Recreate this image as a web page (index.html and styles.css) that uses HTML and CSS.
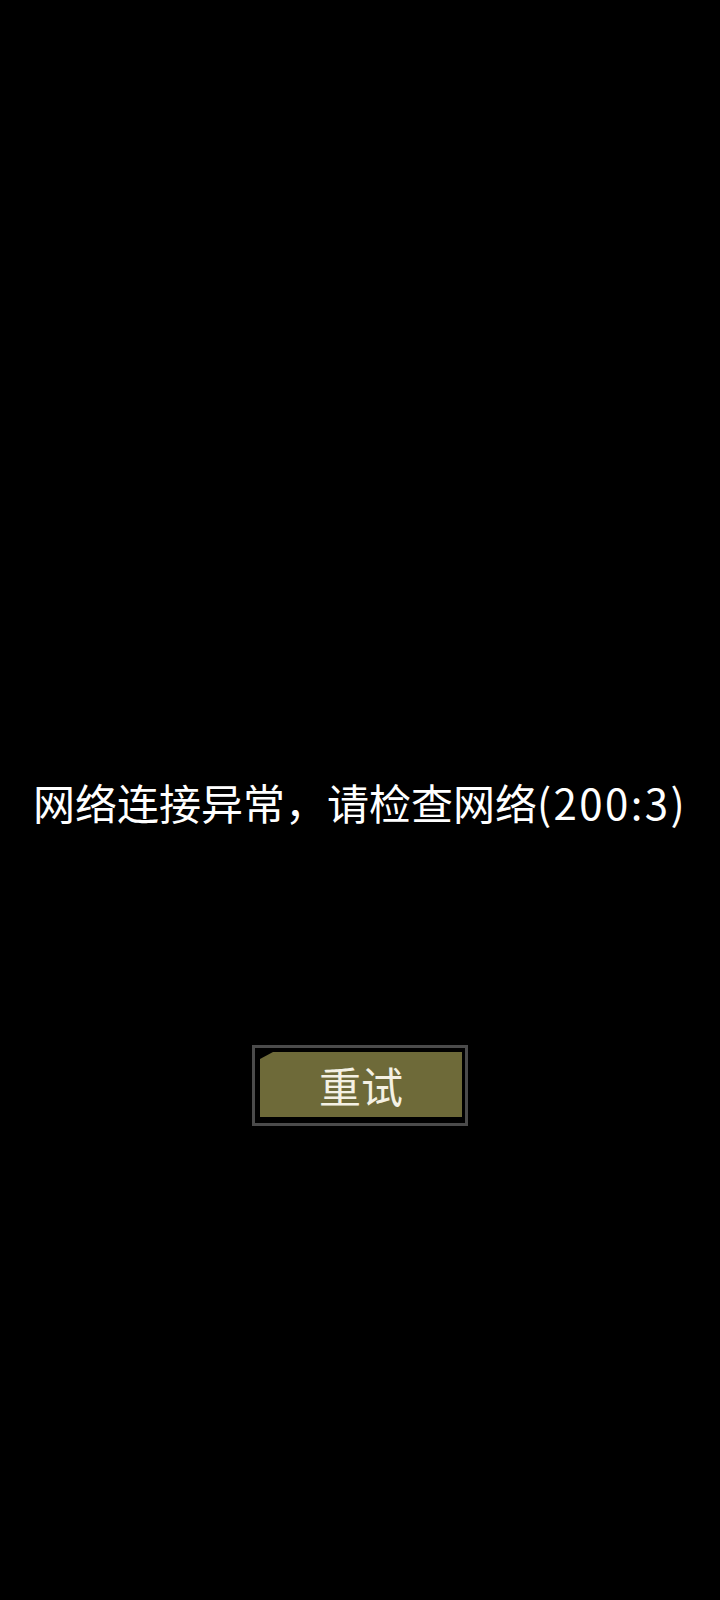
FILE: index.html
```html
<!DOCTYPE html>
<html lang="zh-CN">
<head>
<meta charset="utf-8">
<title>网络连接异常</title>
<link rel="stylesheet" href="styles.css">
</head>
<body>
<main class="screen">
  <p class="msg">网络连接异常，请检查网络<span class="code">(200:3)</span></p>
  <button class="retry" type="button"><span class="retry-face">重试</span></button>
</main>
</body>
</html>
```

FILE: styles.css
```css
html, body {
  margin: 0;
  padding: 0;
  background: #000;
}
.screen {
  box-sizing: border-box;
  width: 720px;
  height: 1600px;
  display: flex;
  flex-direction: column;
  align-items: center;
  padding-top: 776px;
  font-family: "Noto Sans CJK SC", "Noto Sans", sans-serif;
}
.msg {
  margin: 0;
  font-size: 42px;
  line-height: 52px;
  color: #fff;
  white-space: nowrap;
}
.code {
  letter-spacing: 2.4px;
}
.retry {
  margin-top: 217px;
  box-sizing: border-box;
  width: 216px;
  height: 81px;
  border: 3px solid #4b4b4b;
  background: #000;
  padding: 4px 3px 6px 5px;
  cursor: pointer;
}
.retry-face {
  display: flex;
  width: 100%;
  height: 100%;
  align-items: center;
  justify-content: center;
  background: #6e6a39;
  clip-path: polygon(0 7px, 13px 0, 100% 0, 100% 100%, 0 100%);
  font-family: "Noto Sans CJK SC", sans-serif;
  font-size: 42px;
  color: #f4f1e4;
}
```
